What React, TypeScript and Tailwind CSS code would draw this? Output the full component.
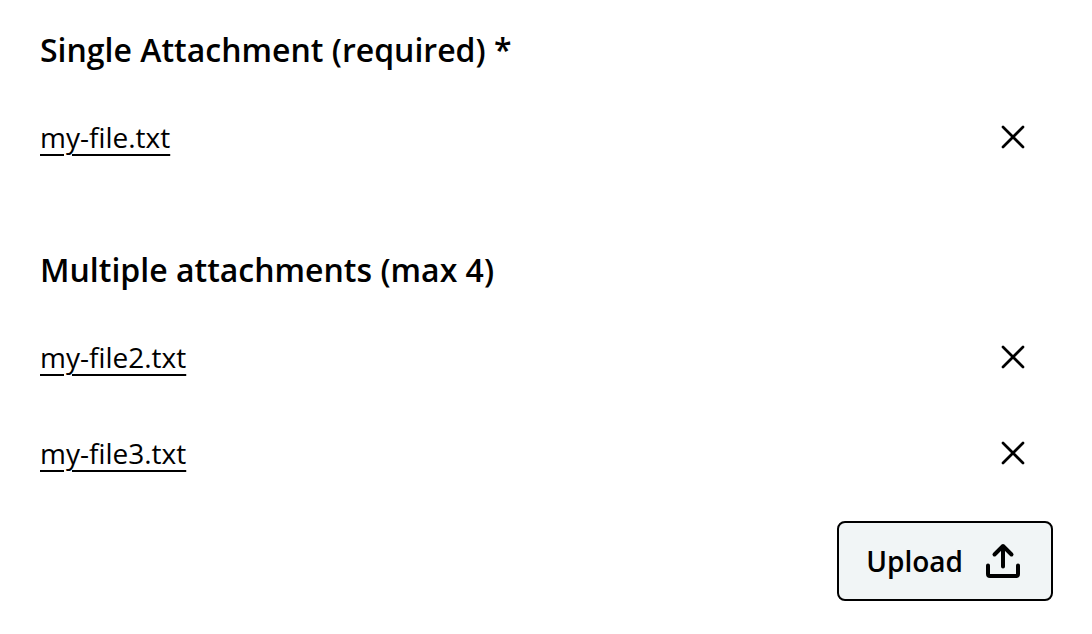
type Attachment = {
    name: string
    link: string
}

const single: Attachment[] = [
    { name: "my-file.txt", link: "#my-file" },
]

const multiple: Attachment[] = [
    { name: "my-file2.txt", link: "#my-file2" },
    { name: "my-file3.txt", link: "#my-file3" },
]

function AttachmentList({ files }: { files: Attachment[] }) {
    return (
        <ul className="flex flex-col gap-12">
            {files.map((file) => (
                <li key={file.name} className="flex h-12 items-center justify-between">
                    <a
                        href={file.link}
                        className="text-[28px] leading-10 underline decoration-2 underline-offset-6"
                    >
                        {file.name}
                    </a>
                    <button type="button" aria-label={`Remove ${file.name}`} className="mr-5 p-2">
                        <svg
                            className="size-6"
                            viewBox="0 0 24 24"
                            fill="none"
                            stroke="currentColor"
                            strokeWidth="2.7"
                            strokeLinecap="round"
                        >
                            <path d="M2 2L22 22M22 2L2 22" />
                        </svg>
                    </button>
                </li>
            ))}
        </ul>
    )
}

function App() {
    return (
        <main className="flex flex-col pt-7 pr-[39px] pb-8 pl-10 font-['Open_Sans',sans-serif] text-black">
            <section>
                <h2 className="mb-[41px] text-[32px] leading-11 font-semibold">Single Attachment (required) *</h2>
                <AttachmentList files={single} />
            </section>
            <section className="mt-[87px]">
                <h2 className="mb-[41px] text-[32px] leading-11 font-semibold">Multiple attachments (max 4)</h2>
                <AttachmentList files={multiple} />
            </section>
            <button
                type="button"
                className="mt-11 flex h-20 items-center gap-5 self-end rounded-lg border-2 border-black bg-[#f1f5f6] pr-7 pl-[27px] text-[28px] font-semibold"
            >
                Upload
                <svg
                    className="size-10"
                    viewBox="0 0 40 40"
                    fill="none"
                    stroke="currentColor"
                    strokeWidth="4"
                    strokeLinecap="round"
                    strokeLinejoin="round"
                >
                    <path d="M5 24.5V33Q5 35 7 35H33Q35 35 35 33V24.5" />
                    <path d="M20 25.5V5M11.5 13.5L20 5L28.5 13.5" />
                </svg>
            </button>
        </main>
    )
}

export default App
